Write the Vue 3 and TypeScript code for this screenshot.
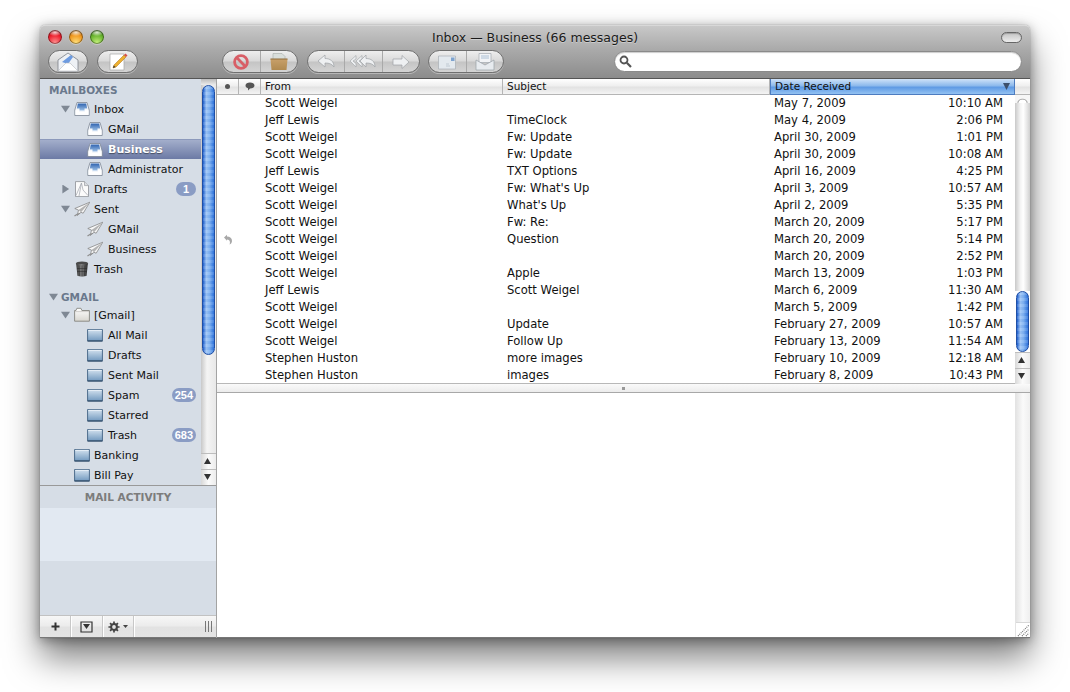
<script setup lang="ts">
interface Box {
  name: string
  icon: string
  depth: number
  arrow?: 'open' | 'closed'
  badge?: string
  selected?: boolean
}

interface Msg {
  from: string
  subject: string
  date: string
  time: string
  replied?: boolean
}

const mailboxes: Box[] = [
  { name: 'Inbox', icon: 'tray', depth: 1, arrow: 'open' },
  { name: 'GMail', icon: 'tray', depth: 2 },
  { name: 'Business', icon: 'tray', depth: 2, selected: true },
  { name: 'Administrator', icon: 'tray', depth: 2 },
  { name: 'Drafts', icon: 'draft', depth: 1, arrow: 'closed', badge: '1' },
  { name: 'Sent', icon: 'plane', depth: 1, arrow: 'open' },
  { name: 'GMail', icon: 'plane', depth: 2 },
  { name: 'Business', icon: 'plane', depth: 2 },
  { name: 'Trash', icon: 'bin', depth: 1 },
]

const gmail: Box[] = [
  { name: '[Gmail]', icon: 'folder-white', depth: 1, arrow: 'open' },
  { name: 'All Mail', icon: 'folder', depth: 2 },
  { name: 'Drafts', icon: 'folder', depth: 2 },
  { name: 'Sent Mail', icon: 'folder', depth: 2 },
  { name: 'Spam', icon: 'folder', depth: 2, badge: '254' },
  { name: 'Starred', icon: 'folder', depth: 2 },
  { name: 'Trash', icon: 'folder', depth: 2, badge: '683' },
  { name: 'Banking', icon: 'folder', depth: 1 },
  { name: 'Bill Pay', icon: 'folder', depth: 1 },
]

const messages: Msg[] = [
  { from: 'Scott Weigel', subject: '', date: 'May 7, 2009', time: '10:10 AM' },
  { from: 'Jeff Lewis', subject: 'TimeClock', date: 'May 4, 2009', time: '2:06 PM' },
  { from: 'Scott Weigel', subject: 'Fw: Update', date: 'April 30, 2009', time: '1:01 PM' },
  { from: 'Scott Weigel', subject: 'Fw: Update', date: 'April 30, 2009', time: '10:08 AM' },
  { from: 'Jeff Lewis', subject: 'TXT Options', date: 'April 16, 2009', time: '4:25 PM' },
  { from: 'Scott Weigel', subject: "Fw: What's Up", date: 'April 3, 2009', time: '10:57 AM' },
  { from: 'Scott Weigel', subject: "What's Up", date: 'April 2, 2009', time: '5:35 PM' },
  { from: 'Scott Weigel', subject: 'Fw: Re:', date: 'March 20, 2009', time: '5:17 PM' },
  { from: 'Scott Weigel', subject: 'Question', date: 'March 20, 2009', time: '5:14 PM', replied: true },
  { from: 'Scott Weigel', subject: '', date: 'March 20, 2009', time: '2:52 PM' },
  { from: 'Scott Weigel', subject: 'Apple', date: 'March 13, 2009', time: '1:03 PM' },
  { from: 'Jeff Lewis', subject: 'Scott Weigel', date: 'March 6, 2009', time: '11:30 AM' },
  { from: 'Scott Weigel', subject: '', date: 'March 5, 2009', time: '1:42 PM' },
  { from: 'Scott Weigel', subject: 'Update', date: 'February 27, 2009', time: '10:57 AM' },
  { from: 'Scott Weigel', subject: 'Follow Up', date: 'February 13, 2009', time: '11:54 AM' },
  { from: 'Stephen Huston', subject: 'more images', date: 'February 10, 2009', time: '12:18 AM' },
  { from: 'Stephen Huston', subject: 'images', date: 'February 8, 2009', time: '10:43 PM' },
]
</script>

<template>
  <div class="page">
    <svg class="defs" width="0" height="0">
      <defs>
        <linearGradient id="trayBlue" x1="0" y1="0" x2="0" y2="1">
          <stop offset="0" stop-color="#2f63b0" />
          <stop offset="1" stop-color="#9cc0e6" />
        </linearGradient>
        <linearGradient id="folderBlue" x1="0" y1="0" x2="0" y2="1">
          <stop offset="0" stop-color="#d3e2ef" />
          <stop offset="1" stop-color="#7299bf" />
        </linearGradient>
        <linearGradient id="folderWhite" x1="0" y1="0" x2="0" y2="1">
          <stop offset="0" stop-color="#ffffff" />
          <stop offset="1" stop-color="#d8d6d0" />
        </linearGradient>
        <linearGradient id="binGrey" x1="0" y1="0" x2="1" y2="0">
          <stop offset="0" stop-color="#3a3a3a" />
          <stop offset=".45" stop-color="#808080" />
          <stop offset="1" stop-color="#2c2c2c" />
        </linearGradient>
        <linearGradient id="bagTan" x1="0" y1="0" x2="0" y2="1">
          <stop offset="0" stop-color="#c8a06a" />
          <stop offset="1" stop-color="#b08a50" />
        </linearGradient>
        <symbol id="tray" viewBox="0 0 16 16">
          <path d="M3 1.500h10l2.200 7.500v5.500H.8V9z" fill="#f4f7fb" stroke="#7d8794" stroke-width=".8" />
          <path d="M3.800 2.500h8.400l1 5H10.500v2h-5v-2H2.800z" fill="url(#trayBlue)" />
          <path d="M1.500 9.300h3.600v1.800h5.800V9.300h3.600v4.500h-13z" fill="#fff" />
        </symbol>
        <symbol id="draft" viewBox="0 0 16 16">
          <path d="M1.500 .6h9l4 4v11h-13z" fill="#fbfbfb" stroke="#8b8f96" stroke-width=".8" />
          <path d="M2 14.500 7.500 2l1.500 7 5 5.500M7.500 2 5 15" fill="none" stroke="#a0a5ad" stroke-width=".7" />
          <path d="M10.500 .6v4h4" fill="#d9dce0" stroke="#8b8f96" stroke-width=".6" />
        </symbol>
        <symbol id="plane" viewBox="0 0 16 16">
          <path d="M15.800 1.200.8 7.500l3.700 1.600L3.300 14.500l3.700-3.200 2.200.9z" fill="#f7f7f7" stroke="#7a7a7a" stroke-width=".7" stroke-linejoin="round" />
          <path d="M15.800 1.200 4.500 9.100l2.500 2.200z" fill="#b4b4b4" />
          <path d="M.5 15c2-1.700 3-2.300 5.500-2.800" fill="none" stroke="#8f8f8f" stroke-width="1.100" />
        </symbol>
        <symbol id="bin" viewBox="0 0 16 16">
          <ellipse cx="8" cy="2.400" rx="6.200" ry="2" fill="#4a4a4a" />
          <path d="M2.200 3h11.600l-1.200 11.800c-1 .9-8.200.9-9.200 0z" fill="url(#binGrey)" />
          <path d="M5 4.500l.5 10.500M8 4.500V15.500M11 4.500l-.5 10.500M3 7.500h10M3.300 10.500h9.400" stroke="#262626" stroke-width=".5" fill="none" />
        </symbol>
        <symbol id="folder" viewBox="0 0 16 16">
          <path d="M.6 2.500h14.800v11.400H.6z" fill="url(#folderBlue)" stroke="#4b6b8b" stroke-width="1" />
          <path d="M1.300 3.300h13.400" stroke="#eef4f9" stroke-width=".9" />
          <path d="M.5 14h15" stroke="#2d4864" stroke-width="1.100" />
        </symbol>
        <symbol id="folder-white" viewBox="0 0 16 16">
          <path d="M.6 3.500h1.300l1-2.200h4l1 2.200h7.500v10.700H.6z" fill="url(#folderWhite)" stroke="#85857f" stroke-width=".9" />
          <path d="M1 4.600h14" stroke="#b8b6b0" stroke-width=".6" />
        </symbol>
      </defs>
    </svg>

    <div class="window">
      <header class="toolbar">
        <div class="title-row">
          <div class="lights">
            <span class="light red"></span>
            <span class="light orange"></span>
            <span class="light green"></span>
          </div>
          <div class="title">Inbox — Business (66 messages)</div>
          <div class="title-end"><span class="pill"></span></div>
        </div>
        <div class="tool-row">
          <div class="tool-group g-mail">
            <button class="tool">
              <svg width="24" height="20" viewBox="0 0 24 20">
                <path d="M2 8 12 1l10 7v11H2z" fill="#eef1f5" stroke="#7b8088" stroke-width=".8" />
                <path d="M6 10l9-7 2 2-5 7z" fill="#6d9be0" />
                <path d="M2 19l8-8h4l8 8z" fill="#fff" stroke="#b6bac0" stroke-width=".6" />
              </svg>
            </button>
          </div>
          <div class="tool-group g-note">
            <button class="tool">
              <svg width="22" height="19" viewBox="0 0 22 19">
                <path d="M3 2h14v16H3z" fill="#fff" stroke="#a8a8a8" stroke-width=".7" />
                <path d="M7 13 17 3l2 2L9 15l-3 1z" fill="#edb02f" stroke="#a86f14" stroke-width=".5" />
                <path d="M17 3l1.500-1.500 2 2L19 5z" fill="#d8504a" />
                <path d="M6 16l.7-2.500L8.600 15z" fill="#3a3a3a" />
              </svg>
            </button>
          </div>
          <div class="tool-group g-delete">
            <button class="tool">
              <svg width="18" height="18" viewBox="0 0 18 18">
                <circle cx="9" cy="9" r="6.400" fill="none" stroke="#d85e66" stroke-width="2.800" />
                <path d="M4.600 4.600l8.800 8.800" stroke="#d85e66" stroke-width="2.800" />
              </svg>
            </button>
            <button class="tool">
              <svg width="20" height="19" viewBox="0 0 20 19">
                <path d="M4 1.500h9l3 3v5H4z" fill="#d9dedb" stroke="#9aa09c" stroke-width=".5" />
                <path d="M1.500 7h17l-1 11h-15z" fill="url(#bagTan)" />
                <path d="M1.500 7h17" stroke="#8f6c3a" stroke-width="1" />
              </svg>
            </button>
          </div>
          <div class="tool-group g-reply">
            <button class="tool">
              <svg width="20" height="16" viewBox="0 0 20 16">
                <path d="M2 7 9 1v3.500c5 0 9 2.500 9 8.500-2-3-4.500-4-9-4V13z" fill="#eef0f2" stroke="#9ea2a6" stroke-width=".7" />
              </svg>
            </button>
            <button class="tool">
              <svg width="28" height="16" viewBox="0 0 28 16">
                <path d="M1 7 7 1.500V5L4 7l3 2.500V13z" fill="#eef0f2" stroke="#9ea2a6" stroke-width=".6" />
                <path d="M7 7 13 1.500V5L10 7l3 2.500V13z" fill="#eef0f2" stroke="#9ea2a6" stroke-width=".6" />
                <path d="M11 7 17 1v3.500c5 0 9 2.500 9 8.500-2-3-4.500-4-9-4V13z" fill="#eef0f2" stroke="#9ea2a6" stroke-width=".7" />
              </svg>
            </button>
            <button class="tool">
              <svg width="20" height="16" viewBox="0 0 20 16">
                <path d="M18 8 11 1.500V5H2v6h9v3.500z" fill="#eef0f2" stroke="#9ea2a6" stroke-width=".7" />
              </svg>
            </button>
          </div>
          <div class="tool-group g-view">
            <button class="tool">
              <svg width="20" height="16" viewBox="0 0 20 16">
                <path d="M1.500 2h17v13h-17z" fill="#e3e9ee" stroke="#a9afb5" stroke-width=".7" />
                <path d="M14 3.500h3.500V7H14z" fill="#7ea3cf" />
                <path d="M9 10h3M9 12h4" stroke="#b6c0ca" stroke-width=".8" />
              </svg>
            </button>
            <button class="tool">
              <svg width="20" height="19" viewBox="0 0 20 19">
                <path d="M4 1.500h12v9H4z" fill="#f1f3f6" stroke="#a3a9b0" stroke-width=".7" />
                <path d="M6 4h8M6 6h8" stroke="#9db3cd" stroke-width=".8" />
                <path d="M1 8l9 5 9-5v10H1z" fill="#e7ebef" stroke="#9aa1a8" stroke-width=".7" />
              </svg>
            </button>
          </div>
          <div class="search">
            <svg width="13" height="13" viewBox="0 0 13 13">
              <circle cx="5" cy="5" r="3.500" fill="none" stroke="#555" stroke-width="1.800" />
              <path d="M7.800 7.800 12 12" stroke="#555" stroke-width="2.200" />
            </svg>
          </div>
        </div>
      </header>

      <div class="body">
        <aside class="side">
          <div class="side-top">
            <nav class="boxes">
              <div class="section first">MAILBOXES</div>
              <div v-for="(b, i) in mailboxes" :key="'m' + i" class="box" :class="{ sel: b.selected, deep: b.depth === 2 }">
                <span class="arrow" :class="b.arrow"></span>
                <svg class="box-icon" width="16" height="16"><use :href="'#' + b.icon" /></svg>
                <span class="box-name">{{ b.name }}</span>
                <span v-if="b.badge" class="badge">{{ b.badge }}</span>
              </div>
              <div class="section gm"><span class="arrow open sec-arrow"></span>GMAIL</div>
              <div v-for="(b, i) in gmail" :key="'g' + i" class="box" :class="{ deep: b.depth === 2 }">
                <span class="arrow" :class="b.arrow"></span>
                <svg class="box-icon" width="16" height="16"><use :href="'#' + b.icon" /></svg>
                <span class="box-name">{{ b.name }}</span>
                <span v-if="b.badge" class="badge">{{ b.badge }}</span>
              </div>
            </nav>
            <div class="side-scroll">
              <div class="cap"></div>
              <div class="thumb side-thumb"></div>
              <div class="track"></div>
              <div class="step up"></div>
              <div class="step down"></div>
            </div>
          </div>
          <div class="activity-head">MAIL ACTIVITY</div>
          <div class="activity-row"></div>
          <div class="activity-rest"></div>
          <div class="side-bar">
            <div class="bar-btn plus">
              <svg width="11" height="11" viewBox="0 0 11 11"><path d="M5.500 1.500v8M1.500 5.500h8" stroke="#333" stroke-width="2" /></svg>
            </div>
            <div class="bar-btn show">
              <svg width="13" height="12" viewBox="0 0 13 12">
                <path d="M1 1h11v10H1z" fill="none" stroke="#333" stroke-width="1.200" />
                <path d="M3 3h7L6.500 8z" fill="#333" />
              </svg>
            </div>
            <div class="bar-btn gear">
              <svg width="12" height="12" viewBox="0 0 14 14">
                <circle cx="7" cy="7" r="3.400" fill="none" stroke="#444" stroke-width="2.400" />
                <path d="M7 .5v3M7 10.500v3M.5 7h3M10.500 7h3M2.400 2.400l2.100 2.100M9.500 9.500l2.100 2.100M11.600 2.400 9.500 4.500M4.500 9.500l-2.100 2.100" stroke="#444" stroke-width="2" />
              </svg>
              <span class="mini-arrow"></span>
            </div>
            <div class="bar-rest"><span class="grip"></span></div>
          </div>
        </aside>

        <main class="main">
          <div class="list-pane">
            <div class="list-area">
              <div class="list-head">
                <div class="hcell c-flag"><span class="dot"></span></div>
                <div class="hcell c-note">
                  <svg width="10" height="9" viewBox="0 0 10 9"><path d="M5 .5c2.500 0 4.500 1.200 4.500 3S7.500 6.500 5 6.500L3 8.500V6.300C1.500 5.900.5 4.800.5 3.500.5 1.700 2.500.5 5 .5z" fill="#555" /></svg>
                </div>
                <div class="hcell c-from">From</div>
                <div class="hcell c-subject">Subject</div>
                <div class="hcell c-date active"><span>Date Received</span><span class="sort"></span></div>
              </div>
              <div class="rows">
                <div v-for="(m, i) in messages" :key="i" class="row">
                  <div class="c-flag reply-cell">
                    <svg v-if="m.replied" width="10" height="11" viewBox="0 0 10 11">
                      <path d="M1 3.500 4 .8v1.700c3 0 5 1.500 5 4.500 0 1.500-1 3-2.500 3.500C7.500 8.500 7 5.500 4 5.500v1.300z" fill="#a8a8a8" />
                    </svg>
                  </div>
                  <div class="c-note"></div>
                  <div class="c-from cell">{{ m.from }}</div>
                  <div class="c-subject cell">{{ m.subject }}</div>
                  <div class="c-date cell date"><span>{{ m.date }}</span><span>{{ m.time }}</span></div>
                </div>
              </div>
            </div>
            <div class="list-scroll">
              <div class="corner"></div>
              <div class="lcap"></div>
              <div class="track groove"></div>
              <div class="thumb list-thumb"></div>
              <div class="step up"></div>
              <div class="step down"></div>
            </div>
          </div>
          <div class="splitter"><span class="knob"></span></div>
          <div class="preview">
            <div class="preview-body"></div>
            <div class="preview-scroll">
              <div class="track pale"></div>
              <div class="resize">
                <svg width="14" height="14" viewBox="0 0 14 14">
                  <path d="M2 13 13 2M6 13l7-7M10 13l3-3" stroke="#777" stroke-width="1.200" stroke-dasharray="1 1" />
                </svg>
              </div>
            </div>
          </div>
        </main>
      </div>
    </div>
  </div>
</template>

<style>
html,
body {
  margin: 0;
  background: #fff;
}
</style>

<style scoped>
.page {
  width: 1070px;
  height: 692px;
  box-sizing: border-box;
  padding: 25px 40px 54px;
  background: #fff;
  overflow: hidden;
  font-family: "DejaVu Sans", "Liberation Sans", sans-serif;
  font-size: 11px;
  color: #111;
}

.defs {
  display: block;
  height: 0;
}

.window {
  height: 613px;
  display: flex;
  flex-direction: column;
  border-radius: 5px 5px 0 0;
  background: #fff;
  box-shadow: 0 20px 34px rgba(0, 0, 0, 0.5), 0 2px 12px rgba(0, 0, 0, 0.35), 0 0 1px rgba(0, 0, 0, 0.5);
}

/* titlebar + toolbar */
.toolbar {
  height: 54px;
  flex: none;
  box-sizing: border-box;
  border-radius: 5px 5px 0 0;
  border-top: 1px solid #d8d8d8;
  border-bottom: 1px solid #555;
  background: linear-gradient(#c8c8c8, #aaa 45%, #8c8c8c);
}

.title-row {
  height: 22px;
  display: grid;
  grid-template-columns: 1fr auto 1fr;
  align-items: center;
  padding: 0 8px;
}

.lights {
  display: flex;
  gap: 7px;
}

.light {
  width: 14px;
  height: 14px;
  border-radius: 50%;
  box-shadow: inset 0 0 0 1px rgba(0, 0, 0, 0.4), 0 1px 0 rgba(255, 255, 255, 0.3);
}

.red {
  background:
    radial-gradient(ellipse 50% 26% at 50% 18%, rgba(255, 255, 255, 0.8), transparent),
    radial-gradient(circle at 50% 90%, #ff8f8f, #ec1c2a 55%, #9c0f16 90%);
}

.orange {
  background:
    radial-gradient(ellipse 50% 26% at 50% 18%, rgba(255, 255, 255, 0.8), transparent),
    radial-gradient(circle at 50% 90%, #ffe07c, #f0961c 55%, #99580c 90%);
}

.green {
  background:
    radial-gradient(ellipse 50% 26% at 50% 18%, rgba(255, 255, 255, 0.8), transparent),
    radial-gradient(circle at 50% 90%, #c4f07c, #66b32c 55%, #2f6a0c 90%);
}

.title {
  font-size: 12.5px;
  color: #1a1a1a;
  text-shadow: 0 1px 0 rgba(255, 255, 255, 0.35);
}

.title-end {
  display: flex;
  justify-content: flex-end;
}

.pill {
  width: 19px;
  height: 9px;
  border: 1px solid #666;
  border-radius: 6px;
  background: linear-gradient(#c4c4c4, #ececec);
  box-shadow: inset 0 1px 1px rgba(0, 0, 0, 0.2);
}

.tool-row {
  display: flex;
  align-items: flex-start;
  height: 31px;
  padding: 2px 8px 0;
}

.tool-group {
  height: 23px;
  box-sizing: border-box;
  display: flex;
  border: 1px solid #6f6f6f;
  border-radius: 12px;
  overflow: hidden;
  background: linear-gradient(#eee, #d9d9d9 48%, #c4c4c4 52%, #d4d4d4);
  box-shadow: 0 1px 0 rgba(255, 255, 255, 0.35);
}

.g-mail {
  width: 40px;
}

.g-note {
  width: 41px;
  margin-left: 9px;
}

.g-delete {
  width: 76px;
  margin-left: 84px;
}

.g-reply {
  width: 113px;
  margin-left: 9px;
}

.g-view {
  width: 76px;
  margin-left: 8px;
}

.tool {
  flex: 1;
  padding: 0;
  border: 0;
  border-left: 1px solid #a9a9a9;
  background: transparent;
  display: flex;
  align-items: center;
  justify-content: center;
}

.tool:first-child {
  border-left: 0;
}

.search {
  width: 408px;
  height: 21px;
  box-sizing: border-box;
  margin-left: 110px;
  margin-top: 1px;
  padding-left: 4px;
  display: flex;
  align-items: center;
  border-radius: 11px;
  border: 1px solid #8a8a8a;
  background: #fff;
  box-shadow: inset 0 1px 1px rgba(0, 0, 0, 0.2);
}

/* body */
.body {
  flex: 1;
  min-height: 0;
  display: flex;
}

.side {
  width: 176px;
  flex: none;
  display: flex;
  flex-direction: column;
  background: #d6dde6;
  border-right: 1px solid #a3a3a3;
}

.side-top {
  height: 406px;
  display: flex;
  flex: none;
}

.boxes {
  width: 161px;
  flex: none;
  overflow: hidden;
}

.section {
  font-weight: 700;
  color: #6a788c;
  font-size: 10.5px;
  display: flex;
  align-items: center;
}

.section.first {
  height: 20px;
  padding: 1px 0 0 9px;
  box-sizing: border-box;
}

.section.gm {
  height: 18px;
  margin-top: 8px;
  padding: 2px 0 0 9px;
  box-sizing: border-box;
}

.box {
  height: 20px;
  display: flex;
  align-items: center;
  padding-left: 21px;
  padding-right: 5px;
  box-sizing: border-box;
  color: #111;
}

.box.deep {
  padding-left: 47px;
}

.box.deep .arrow {
  display: none;
}

.box.sel {
  background: linear-gradient(#a3aecb, #6c7aa5);
  border-top: 1px solid #8c99bb;
  color: #fff;
  font-weight: 700;
  text-shadow: 0 1px 1px rgba(0, 0, 0, 0.45);
}

.arrow {
  width: 9px;
  height: 9px;
  flex: none;
  margin-right: 4px;
}

.arrow.open {
  background: #7f8894;
  clip-path: polygon(0 15%, 100% 15%, 50% 90%);
}

.arrow.closed {
  background: #7f8894;
  clip-path: polygon(15% 0, 90% 50%, 15% 100%);
}

.sec-arrow {
  margin-right: 3px;
}

.box-icon {
  flex: none;
}

.box-name {
  margin-left: 4px;
  flex: 1;
  white-space: nowrap;
}

.deep .box-name {
  margin-left: 5px;
}

.badge {
  height: 14px;
  min-width: 20px;
  padding: 0 3px;
  box-sizing: border-box;
  border-radius: 7px;
  background: #8a9cc4;
  color: #fff;
  font-family: "Liberation Sans", sans-serif;
  font-size: 11px;
  font-weight: 700;
  line-height: 14px;
  text-align: center;
}

/* scrollbars */
.side-scroll {
  width: 15px;
  flex: none;
  display: flex;
  flex-direction: column;
  background: linear-gradient(90deg, #c8c8c8, #f4f4f4 40%, #e8e8e8);
}

.cap {
  height: 6px;
  flex: none;
  background: linear-gradient(#bbb, #ececec);
}

.thumb {
  flex: none;
  width: 13px;
  margin-left: 1px;
  box-sizing: border-box;
  border-radius: 7px;
  border: 1px solid #1f4fa6;
  background:
    repeating-linear-gradient(rgba(255, 255, 255, 0.1) 0 3px, rgba(10, 62, 160, 0.05) 3px 6px),
    linear-gradient(90deg, #1d5fcf, #9fc6f6 30%, #7fb2f2 60%, #2f74dc);
}

.side-thumb {
  height: 270px;
}

.track {
  flex: 1;
}

.step {
  flex: none;
  height: 15px;
  position: relative;
  border-top: 1px solid #bdbdbd;
  background: linear-gradient(90deg, #d8d8d8, #fbfbfb 50%, #ececec);
}

.step::after {
  content: "";
  position: absolute;
  left: 3px;
  top: 4px;
  width: 7px;
  height: 6px;
  background: #333;
}

.step.up::after {
  clip-path: polygon(50% 0, 100% 100%, 0 100%);
}

.step.down::after {
  clip-path: polygon(0 0, 100% 0, 50% 100%);
}

.activity-head {
  height: 23px;
  flex: none;
  box-sizing: border-box;
  border-top: 1px solid #999;
  font-weight: 700;
  font-size: 10.5px;
  color: #7c7c7c;
  display: flex;
  align-items: center;
  justify-content: center;
}

.activity-row {
  height: 53px;
  flex: none;
  background: #e2e9f2;
}

.activity-rest {
  flex: 1;
}

.side-bar {
  height: 23px;
  flex: none;
  box-sizing: border-box;
  display: flex;
  border-top: 1px solid #c2c2c2;
  border-bottom: 1px solid #777;
  background: linear-gradient(#f7f7f7, #ececec 45%, #e2e2e2 55%, #e4e4e4);
}

.bar-btn {
  border-right: 1px solid #c8c8c8;
  box-shadow: 1px 0 0 #fff;
  display: flex;
  align-items: center;
  justify-content: center;
}

.plus {
  width: 30px;
}

.show {
  width: 31px;
}

.gear {
  width: 30px;
  gap: 3px;
}

.mini-arrow {
  width: 5px;
  height: 3px;
  background: #444;
  clip-path: polygon(0 0, 100% 0, 50% 100%);
}

.bar-rest {
  flex: 1;
  display: flex;
  align-items: center;
  justify-content: flex-end;
  padding-right: 4px;
}

.grip {
  width: 7px;
  height: 11px;
  background: repeating-linear-gradient(90deg, #777 0 1px, transparent 1px 3px);
}

/* main */
.main {
  flex: 1;
  min-width: 0;
  display: flex;
  flex-direction: column;
  border-bottom: 1px solid #777;
  box-sizing: border-box;
}

.list-pane {
  height: 304px;
  flex: none;
  display: flex;
}

.list-area {
  width: 798px;
  flex: none;
}

.list-head {
  height: 16px;
  box-sizing: border-box;
  display: flex;
  border-bottom: 1px solid #b5b5b5;
  background: linear-gradient(#fff, #efefef 45%, #e2e2e2 55%, #f4f4f4);
  font-size: 10.5px;
  line-height: 15px;
}

.hcell {
  box-sizing: border-box;
  padding-left: 4px;
  border-right: 1px solid #b5b5b5;
  display: flex;
  align-items: center;
}

.c-flag {
  width: 22px;
  flex: none;
  box-sizing: border-box;
}

.c-note {
  width: 22px;
  flex: none;
  box-sizing: border-box;
}

.c-from {
  width: 242px;
  flex: none;
  box-sizing: border-box;
}

.c-subject {
  width: 267px;
  flex: none;
  box-sizing: border-box;
}

.c-date {
  flex: 1;
  min-width: 0;
  box-sizing: border-box;
}

.hcell.c-flag,
.hcell.c-note {
  justify-content: center;
  padding-left: 0;
}

.dot {
  width: 5px;
  height: 5px;
  border-radius: 50%;
  background: #555;
}

.hcell.active {
  justify-content: space-between;
  padding-right: 4px;
  border-right: 1px solid #4d7cc0;
  border-left: 1px solid #4d7cc0;
  border-bottom: 1px solid #4d7cc0;
  background: linear-gradient(#cfe2f8, #8cb9ec 45%, #5f9ae4 55%, #93c2f2);
  height: 16px;
}

.sort {
  width: 7px;
  height: 7px;
  background: #3c4f6b;
  clip-path: polygon(0 0, 100% 0, 50% 100%);
}

.rows {
  height: 288px;
  overflow: hidden;
  font-size: 11.6px;
}

.row {
  height: 17px;
  box-sizing: border-box;
  padding-bottom: 1px;
  display: flex;
  align-items: center;
  line-height: 16px;
}

.cell {
  padding-left: 4px;
  white-space: nowrap;
}

.date {
  display: flex;
  justify-content: space-between;
  padding-right: 12px;
}

.reply-cell {
  display: flex;
  justify-content: center;
}

.list-scroll {
  flex: 1;
  min-width: 0;
  display: flex;
  flex-direction: column;
  background: #fff;
}

.corner {
  height: 16px;
  flex: none;
  border-bottom: 1px solid #b5b5b5;
  box-sizing: border-box;
  background: linear-gradient(#fff, #efefef 45%, #e2e2e2 55%, #f4f4f4);
}

.lcap {
  height: 8px;
  flex: none;
  background: radial-gradient(ellipse 6px 5px at 50% 100%, #fff 0 60%, #a9a9a9 75%, #f6f6f6 95%);
}

.track.groove {
  height: 188px;
  flex: none;
  background: linear-gradient(90deg, #c9c9c9, #f3f3f3 35%, #fff 55%, #e6e6e6 80%, #cfcfcf);
}

.list-thumb {
  height: 61px;
}

.list-scroll .step {
  height: 15px;
}

.splitter {
  height: 10px;
  flex: none;
  box-sizing: border-box;
  border-top: 1px solid #b8b8b8;
  border-bottom: 1px solid #a8a8a8;
  background: linear-gradient(#fafafa, #ececec);
  display: flex;
  align-items: center;
  justify-content: center;
}

.knob {
  width: 3px;
  height: 3px;
  background: #999;
}

.preview {
  flex: 1;
  min-height: 0;
  display: flex;
}

.preview-body {
  flex: 1;
  background: #fff;
}

.preview-scroll {
  width: 14px;
  flex: none;
  display: flex;
  flex-direction: column;
  border-left: 1px solid #e4e4e4;
}

.track.pale {
  flex: 1;
  background: linear-gradient(90deg, #e4e4e4, #fafafa 50%, #efefef);
}

.resize {
  height: 14px;
  flex: none;
  border-top: 1px solid #d8d8d8;
  background: #fff;
}

.resize svg {
  display: block;
}
</style>
